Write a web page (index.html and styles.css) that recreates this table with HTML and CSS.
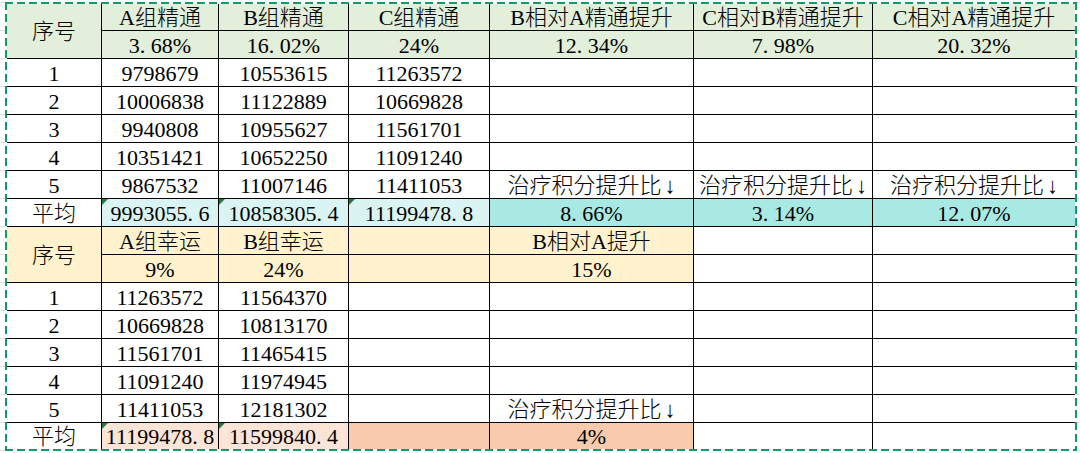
FILE: index.html
```html
<!DOCTYPE html>
<html lang="zh-CN">
<head>
<meta charset="utf-8">
<title>精通 / 幸运 对比</title>
<link rel="stylesheet" href="styles.css">
</head>
<body>
<div class="sheet">
  <table class="grid">
    <colgroup>
      <col class="c0"><col class="c1"><col class="c2"><col class="c3"><col class="c4"><col class="c5"><col class="c6">
    </colgroup>
    <tbody>
      <tr class="r-top">
        <td rowspan="2" class="green">序号</td>
        <td class="green">A组精通</td>
        <td class="green">B组精通</td>
        <td class="green">C组精通</td>
        <td class="green">B相对A精通提升</td>
        <td class="green">C相对B精通提升</td>
        <td class="green">C相对A精通提升</td>
      </tr>
      <tr>
        <td class="green">3<span class="dot">.</span>68%</td>
        <td class="green">16<span class="dot">.</span>02%</td>
        <td class="green">24%</td>
        <td class="green">12<span class="dot">.</span>34%</td>
        <td class="green">7<span class="dot">.</span>98%</td>
        <td class="green">20<span class="dot">.</span>32%</td>
      </tr>
      <tr><td>1</td><td>9798679</td><td>10553615</td><td>11263572</td><td></td><td></td><td></td></tr>
      <tr><td>2</td><td>10006838</td><td>11122889</td><td>10669828</td><td></td><td></td><td></td></tr>
      <tr><td>3</td><td>9940808</td><td>10955627</td><td>11561701</td><td></td><td></td><td></td></tr>
      <tr><td>4</td><td>10351421</td><td>10652250</td><td>11091240</td><td></td><td></td><td></td></tr>
      <tr><td>5</td><td>9867532</td><td>11007146</td><td>11411053</td><td>治疗积分提升比<span class="arrow">↓</span></td><td>治疗积分提升比<span class="arrow">↓</span></td><td>治疗积分提升比<span class="arrow">↓</span></td></tr>
      <tr>
        <td>平均</td>
        <td class="cyan flag">9993055<span class="dot">.</span>6</td>
        <td class="cyan flag">10858305<span class="dot">.</span>4</td>
        <td class="cyan flag">11199478<span class="dot">.</span>8</td>
        <td class="teal">8<span class="dot">.</span>66%</td>
        <td class="teal">3<span class="dot">.</span>14%</td>
        <td class="teal">12<span class="dot">.</span>07%</td>
      </tr>
      <tr>
        <td rowspan="2" class="yellow">序号</td>
        <td class="yellow">A组幸运</td>
        <td class="yellow">B组幸运</td>
        <td class="yellow"></td>
        <td class="yellow">B相对A提升</td>
        <td></td>
        <td></td>
      </tr>
      <tr>
        <td class="yellow">9%</td>
        <td class="yellow">24%</td>
        <td class="yellow"></td>
        <td class="yellow">15%</td>
        <td></td>
        <td></td>
      </tr>
      <tr><td>1</td><td>11263572</td><td>11564370</td><td></td><td></td><td></td><td></td></tr>
      <tr><td>2</td><td>10669828</td><td>10813170</td><td></td><td></td><td></td><td></td></tr>
      <tr><td>3</td><td>11561701</td><td>11465415</td><td></td><td></td><td></td><td></td></tr>
      <tr><td>4</td><td>11091240</td><td>11974945</td><td></td><td></td><td></td><td></td></tr>
      <tr><td>5</td><td>11411053</td><td>12181302</td><td></td><td>治疗积分提升比<span class="arrow">↓</span></td><td></td><td></td></tr>
      <tr class="r-last">
        <td>平均</td>
        <td class="peach flag">11199478<span class="dot">.</span>8</td>
        <td class="peach flag">11599840<span class="dot">.</span>4</td>
        <td class="salmon"></td>
        <td class="salmon">4%</td>
        <td></td>
        <td></td>
      </tr>
    </tbody>
  </table>
</div>
</body>
</html>
```

FILE: styles.css
```css
html, body {
  margin: 0;
  padding: 0;
}

body {
  width: 1080px;
  height: 453px;
  overflow: hidden;
  background-color: #ffffff;
  background-image: repeating-linear-gradient(to bottom,
      transparent 0 2px, #dedede 2px 3px, transparent 3px 28px);
  font-family: "Liberation Serif", "Noto Sans CJK SC", serif;
  color: #000;
}

.sheet {
  position: relative;
  width: 1068px;
  margin: 2px 0 0 5px;
  padding: 2px;
  background: #fff;
}

/* Excel copy-marquee dashed outline */
.sheet::after {
  content: "";
  position: absolute;
  inset: 0;
  pointer-events: none;
  background:
    repeating-linear-gradient(90deg, #119b68 0 8px, transparent 8px 12px) left top / 100% 2px no-repeat,
    repeating-linear-gradient(90deg, #119b68 0 8px, transparent 8px 12px) left bottom / 100% 2px no-repeat,
    repeating-linear-gradient(180deg, #119b68 0 8px, transparent 8px 12px) left top / 2px 100% no-repeat,
    repeating-linear-gradient(180deg, #119b68 0 8px, transparent 8px 12px) right top / 2px 100% no-repeat;
}

.grid {
  width: 1068px;
  table-layout: fixed;
  border-collapse: separate;
  border-spacing: 0;
}

.c0 { width: 95px; }
.c1 { width: 117px; }
.c2 { width: 130px; }
.c3 { width: 141px; }
.c4 { width: 204px; }
.c5 { width: 179px; }
.c6 { width: 202px; }

.grid tr { height: 28px; }
.grid tr.r-top { height: 27px; }
.grid tr.r-last { height: 26px; }

.grid td {
  position: relative;
  padding: 2px 0 0 0;
  border-right: 1px solid #000;
  border-bottom: 1px solid #000;
  font-size: 22px;
  font-weight: 300;
  line-height: 0;
  text-align: center;
  vertical-align: middle;
  white-space: nowrap;
}

.grid td:last-child { border-right: 0; }
.grid tr.r-last td { border-bottom: 0; }

.dot {
  display: inline-block;
  width: 0.5em;
  text-align: left;
}

.arrow {
  margin-left: 3px;
  font-family: "Liberation Serif", serif;
  font-size: 22px;
}

.green  { background: #e2efda; }
.cyan   { background: #daf4f3; }
.teal   { background: #a9e9e3; }
.yellow { background: #fff2cc; }
.peach  { background: #fce4d6; }
.salmon { background: #f8cbad; }

/* Excel "number stored as text" indicator */
.flag::before {
  content: "";
  position: absolute;
  left: 0;
  top: 0;
  border-top: 6px solid #1f7a3c;
  border-right: 6px solid transparent;
}
```
